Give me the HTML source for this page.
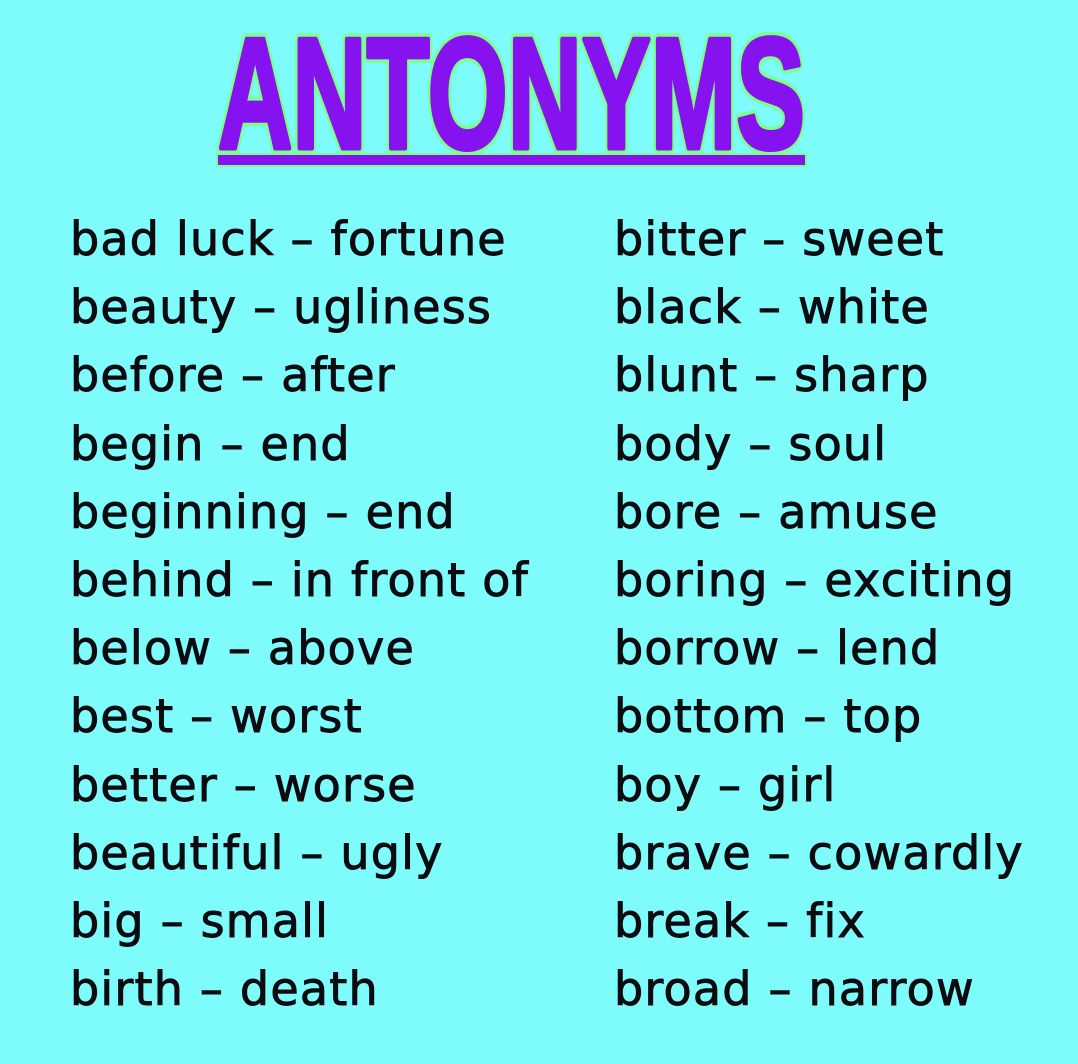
<!DOCTYPE html>
<html><head><meta charset="utf-8"><style>
html,body{margin:0;padding:0}
body{width:1078px;height:1064px;background:#7efcfc;position:relative;overflow:hidden;font-family:"DejaVu Sans","Liberation Sans",sans-serif;color:#0b0b10}
.col{position:absolute;top:205px;font-size:46px;line-height:68.2px;white-space:nowrap;letter-spacing:1.2px;-webkit-text-stroke:0.9px #0b0b10}
.l{left:70px}.r{left:614px}
</style></head><body>
<svg width="1078" height="180" style="position:absolute;left:0;top:0">
<text x="218" y="148" textLength="587" lengthAdjust="spacingAndGlyphs" font-family="Liberation Sans, sans-serif" font-weight="bold" font-size="158" fill="#8512ef" stroke="#7dff8a" stroke-width="12" stroke-linejoin="round">ANTONYMS</text>
<text x="218" y="148" textLength="587" lengthAdjust="spacingAndGlyphs" font-family="Liberation Sans, sans-serif" font-weight="bold" font-size="158" fill="#8512ef" stroke="#8512ef" stroke-width="5" stroke-linejoin="round">ANTONYMS</text>
<rect x="216" y="153" width="591" height="14" fill="#7dff8a"/>
<rect x="218" y="155" width="587" height="10" fill="#8512ef"/>
</svg>
<div class="col l">bad luck – fortune<br>beauty – ugliness<br>before – after<br>begin – end<br>beginning – end<br>behind – in front of<br>below – above<br>best – worst<br>better – worse<br>beautiful – ugly<br>big – small<br>birth – death</div>
<div class="col r">bitter – sweet<br>black – white<br>blunt – sharp<br>body – soul<br>bore – amuse<br>boring – exciting<br>borrow – lend<br>bottom – top<br>boy – girl<br>brave – cowardly<br>break – fix<br>broad – narrow</div>
</body></html>
